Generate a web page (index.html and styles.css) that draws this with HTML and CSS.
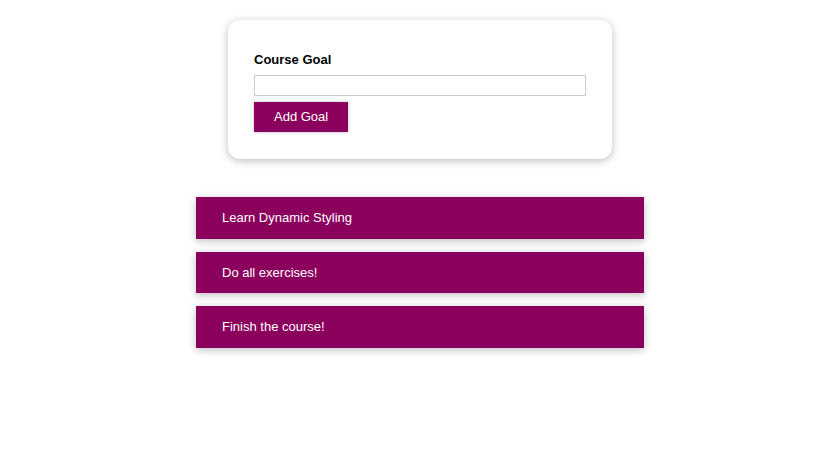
FILE: index.html
```html
<!DOCTYPE html>
<html lang="en">
<head>
<meta charset="utf-8">
<title>Course Goals</title>
<link rel="stylesheet" href="styles.css">
</head>
<body>
<main class="app">
  <section class="goal-form">
    <form>
      <div class="form-control">
        <label for="goal">Course Goal</label>
        <input id="goal" type="text">
      </div>
      <button type="button" class="button">Add Goal</button>
    </form>
  </section>
  <section class="goals">
    <ul class="goal-list">
      <li class="goal-item">Learn Dynamic Styling</li>
      <li class="goal-item">Do all exercises!</li>
      <li class="goal-item">Finish the course!</li>
    </ul>
  </section>
</main>
</body>
</html>
```

FILE: styles.css
```css
* { box-sizing: border-box; }

html, body {
  margin: 0;
  padding: 0;
  background: #fff;
  font-family: "Liberation Sans", Arial, sans-serif;
  font-size: 13px;
}

.app {
  padding-left: 16px;
  padding-top: 20px;
}

.goal-form {
  width: 384px;
  margin: 0 auto;
  padding: 26px 26px 27px;
  border-radius: 12px;
  background: #fff;
  box-shadow: 0 2px 8px rgba(0, 0, 0, 0.26);
}

.form-control {
  margin: 6px 0;
}

.form-control label {
  display: block;
  font-weight: bold;
  line-height: 16px;
  margin-bottom: 7px;
  color: #000;
}

.form-control input {
  display: block;
  width: 100%;
  border: 1px solid #ccc;
  font: inherit;
  height: 21px;
  padding: 0 3px;
  margin: 0;
}

.button {
  font: inherit;
  line-height: 16px;
  height: 30px;
  padding: 6px 19px;
  border: 1px solid #8b005d;
  color: #fff;
  background: #8b005d;
  box-shadow: 0 0 4px rgba(0, 0, 0, 0.26);
  cursor: pointer;
}

.goals {
  width: 448px;
  margin: 38px auto 0;
}

.goal-list {
  list-style: none;
  margin: 0;
  padding: 0;
}

.goal-item {
  margin: 0 0 13px;
  padding: 13px 26px;
  line-height: 15.5px;
  background: #8b005d;
  color: #fff;
  box-shadow: 0 2px 8px rgba(0, 0, 0, 0.26);
}
```
